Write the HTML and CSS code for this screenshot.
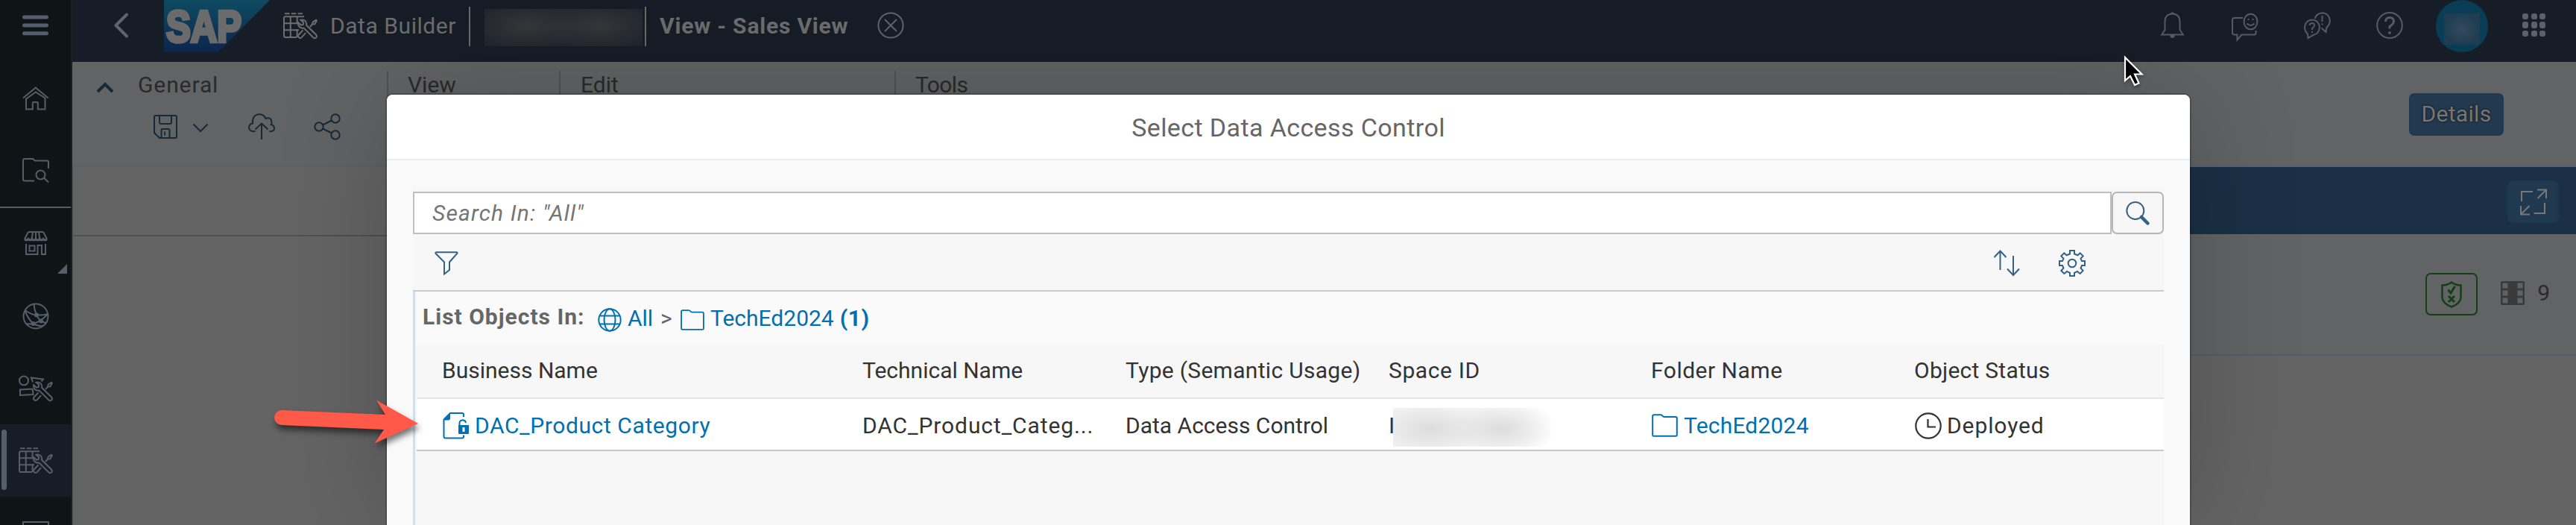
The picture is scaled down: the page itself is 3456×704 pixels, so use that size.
FILE: index.html
```
<!DOCTYPE html>
<html lang="en">
<head>
<meta charset="utf-8">
<title>Data Builder</title>
<link rel="stylesheet" href="styles.css">
</head>
<body>
<svg class="defs" width="0" height="0">
  <symbol id="tools" viewBox="0 0 46 36">
    <path d="M23.5 9.8c4.2-1.4 8.4 1.6 7.6 7L44 29.5c2.5 3-1 6.3-3.8 3.8L27.5 20.5c-4.5 1-8.5-2.5-7.3-7.3l3.6 3.4 3-.6.4-3z"/>
    <path d="M26.5 23.5l-5.8 6c-2.2 3 1.5 6 4 3.6l5.4-6M36 19l3.5-4M39 15.6l.8-3.2L44 9.8l.8 1-2.4 4.4z"/>
  </symbol>
  <symbol id="table-tools" viewBox="0 0 46 36">
    <path d="M2 1.2h6.5M10.8 1.2h6.5M19.6 1.2H26M28 5.2H3q-2 0-2 2V31q0 2 2 2h15M9.8 5v28M18.6 5v9M18.6 22v11M1 14.2h18M1 23.3h20"/>
    <use href="#tools"/>
  </symbol>
  <symbol id="folder" viewBox="0 0 35 31">
    <path d="M1.2 28.5V3q0-1.8 1.8-1.8h9q1.5 0 2.4 1.4.8 1.4 2.5 1.4H32q1.8 0 1.8 1.8v22.7q0 1.3-1.5 1.3H2.7q-1.5 0-1.5-1.3z"/>
  </symbol>
</svg>

<div class="app">
  <nav class="rail">
    <div class="rail-item menu"><svg width="36" height="28" viewBox="0 0 36 28"><path class="bars" d="M2.5 3h30M2.5 14h30M2.5 24.8h30"/></svg></div>
    <div class="rail-item"><svg width="36" height="32" viewBox="0 0 36 32"><path d="M1 15.5L17.8 1.5l16.8 14M5 15.5V30.5h8.8V22q0-1 1-1h5q1 0 1 1v8.500H30.500V15.500L17.800 7.500 5 16.800"/></svg></div>
    <div class="rail-item"><svg width="36" height="34" viewBox="0 0 36 34"><path d="M16 30.500H3q-2 0-2-2V3q0-2 2-2h11l3 2.500h16q2 0 2 2V14M29 26.500l6 6"/><circle cx="24.500" cy="22.500" r="6"/></svg></div>
    <div class="rail-item divided">
      <svg width="32" height="32" viewBox="0 0 32 32"><path d="M6 1h20M6 1L1 10.500M12 1l-1.500 10M16 1v10M20 1l1.500 10M26 1l5 9.500M3 17v14h15.500V19H24v12h5V17M7.500 19.500h7v7h-7z"/><path class="thick" d="M1 10.500q2.500 3 5 0 2.500 3 5 0 2.500 3 5 0 2.500 3 5 0 2.500 3 5 0 2.500 3 5 0"/></svg>
      <span class="corner"></span>
    </div>
    <div class="rail-item"><svg width="36" height="36" viewBox="0 0 36 36"><circle cx="18" cy="18" r="16.500"/><path d="M15.500 2q.5 8 3.500 14M3.500 10Q12 16 19 16.500 28 17 34 15M3.500 11Q8 22 14.500 28 25 33 28.500 30M14.500 28q9-2 19-12M19 16.500q2 5 6.500 8 4 2 6 3M5 28q5 1 10 0"/><g class="solid"><circle cx="19" cy="16.500" r="3"/><circle cx="25" cy="24.500" r="3"/><circle cx="14.500" cy="28" r="3"/></g></svg></div>
    <div class="rail-item"><svg width="46" height="36" viewBox="0 0 46 36"><circle cx="7" cy="7.500" r="6"/><path d="M19 9.500L17 3.500l16 2-2.500 3M19 20.500l-1-2-16 1v7.500l17.500-1z"/><use href="#tools"/></svg></div>
    <div class="rail-item selected"><span class="marker"></span><svg width="46" height="36"><use href="#table-tools"/></svg></div>
    <div class="rail-item last"><svg width="36" height="5" viewBox="0 0 36 5"><path d="M1 5V1h34v4"/></svg></div>
  </nav>

  <div class="page">
    <header class="shell">
      <svg class="back" width="20" height="34" viewBox="0 0 20 34"><path d="M17 2.500L2.500 17 17 31.500"/></svg>
      <svg class="logo" width="142" height="70" viewBox="0 0 142 70">
        <defs><linearGradient id="brand" x1="0" y1="0" x2="0" y2="1"><stop offset="0" stop-color="#0d4b61"/><stop offset="1" stop-color="#0e244c"/></linearGradient></defs>
        <path class="shape" d="M0 0h142L73 70H0z"/>
        <text x="3" y="55.500" textLength="101" lengthAdjust="spacingAndGlyphs">SAP</text>
      </svg>
      <svg class="app-icon" width="46" height="36"><use href="#table-tools"/></svg>
      <span class="app-name">Data Builder</span>
      <span class="rule"></span>
      <span class="redacted"></span>
      <span class="rule second"></span>
      <span class="object-name">View - Sales View</span>
      <svg class="close" width="36" height="36" viewBox="0 0 36 36"><circle cx="18" cy="18" r="16.600"/><path d="M10 10l16 16M26 10L10 26"/></svg>
      <div class="shell-actions">
        <svg width="31" height="36" viewBox="0 0 31 36"><path d="M1.200 30.500L5.500 24V13q0-10 10-10.500 10 .5 10 10.500v11l4.300 6.500zM13.500 2.500q2-2.500 4 0"/><path class="solid" d="M12 31h7q-.5 4-3.500 4T12 31z"/></svg>
        <svg width="36" height="36" viewBox="0 0 36 36"><path d="M15 8H4Q1 8 1 11v17q0 2.500 3 2.500h3.500v7l6-7H30q2.500 0 2.500-2.500v-3"/><ellipse cx="25.500" cy="13" rx="9" ry="10.300"/><path d="M20.500 15.500q5 5 10 0M22.500 9v2M28.500 9v2"/></svg>
        <svg width="36" height="36" viewBox="0 0 36 36"><path d="M5 29.500Q1 26 1 20.500 2 11 11 10.500q9 .5 10 10-1 9-7.500 10L5.500 35z"/><path d="M14.500 9Q17 1.500 25 1.200q9 .8 9.800 10.300 0 6-4.500 9.500L29.500 27l-6-5.500M24.500 5v8M24.500 15.500v2M7.500 18q.5-3 3.500-3 3.500.5 3 3.500-.5 2-3 3.500v2M11 26v2"/></svg>
        <svg width="36" height="36" viewBox="0 0 36 36"><ellipse cx="18" cy="18" rx="16.800" ry="17"/><path class="query" d="M12.500 13q.5-5.500 5.500-5.500t5.500 5q0 3.500-5.500 7v3"/><circle class="solid" cx="18" cy="28" r="2"/></svg>
        <span class="avatar"><span class="face"></span></span>
        <span class="dots"><i></i><i></i><i></i><i></i><i></i><i></i><i></i><i></i><i></i></span>
      </div>
    </header>

    <section class="ribbon">
      <div class="group general">
        <svg class="collapse" width="24" height="14" viewBox="0 0 24 14"><path d="M2 12L12 2l10 10"/></svg>
        <div class="group-body">
          <span class="label wide">General</span>
          <div class="commands">
            <svg width="32" height="32" viewBox="0 0 32 32"><path d="M3 1h26q2 0 2 2v26q0 2-2 2H8L1 24V3q0-2 2-2zM8 1v9q0 2 2 2h12q2 0 2-2V1M10.500 31V21q0-2 2-2h7q2 0 2 2v10M15 22.500v5"/></svg>
            <svg class="drop" width="22" height="13" viewBox="0 0 22 13"><path d="M1.500 1.500L11 11l9.500-9.500"/></svg>
            <svg class="deploy" width="36" height="36" viewBox="0 0 36 36"><path d="M9.500 24Q1.500 25 1 19q.5-5 5-5.500-1-10 6.500-12 8-1.500 11 5.500 7-3 8 5 0 2-.8 3 5 1.500 4.200 6-1.500 4-6.500 3M18 35V13.500M9.500 21.500l8.500-8 8.500 8"/></svg>
            <svg class="share" width="36" height="36" viewBox="0 0 36 36"><circle cx="7" cy="18" r="5.700"/><circle cx="29" cy="7" r="5.700"/><circle cx="29" cy="29" r="5.700"/><path d="M12 15.500L24 9.500M12 20.500l12 6"/></svg>
          </div>
        </div>
      </div>
      <div class="group view"><span class="label">View</span></div>
      <div class="group edit"><span class="label">Edit</span></div>
      <div class="group more"><span class="label tight">Tools</span></div>
      <button class="details">Details</button>
    </section>

    <main class="workspace">
      <div class="canvas"><div class="canvas-bar"></div></div>
      <aside class="properties">
        <div class="properties-head">
          <button class="expand"><svg width="36" height="36" viewBox="0 0 36 36"><path d="M2 17V4h15M23 1.500h12V13M34 2.500L23.500 13M33 19v14H18.500M1 23v11.500h12M2 33.500L12.500 23"/></svg></button>
        </div>
        <div class="properties-status">
          <span class="validation"><svg width="28" height="36" viewBox="0 0 28 36"><path d="M14 1.500q5 4 12.500 4V22q-.5 8-12.500 12.500Q2 30 1.500 22V5.500Q9 5.500 14 1.500z"/><path class="mark" d="M9.500 11.500l3.500 4.500 5.500-9M10 20l8 8M18 20l-8 8"/></svg></span>
          <svg class="film" width="32" height="32" viewBox="0 0 32 32"><rect width="32" height="32" rx="2"/><path d="M2.500 2.500h7v7h-7zM22.500 2.500h7v7h-7zM2.500 12.500h7v7h-7zM22.500 12.500h7v7h-7zM2.500 22.500h7v7h-7zM22.500 22.500h7v7h-7z"/></svg>
          <span class="count">9</span>
        </div>
      </aside>
    </main>
  </div>
</div>

<div class="dialog">
  <h1 class="dialog-title">Select Data Access Control</h1>
  <div class="panel">
    <div class="search">
      <div class="search-field">Search In: "All"</div>
      <button class="search-go"><svg width="32" height="32" viewBox="0 0 32 32"><circle cx="12.800" cy="12.500" r="11.500"/><path class="handle" d="M21 21l8.500 8.500"/></svg></button>
    </div>
    <div class="toolbar">
      <svg width="32" height="32" viewBox="0 0 32 32"><path d="M2 1.200h28q1 1 0 2L20 14.500V25l-7 5.500V14.500L1.800 3.200q-1-1 .2-2z"/></svg>
      <svg class="sort" width="36" height="36" viewBox="0 0 36 36"><path d="M9.500 27V1.500M1.500 10l8-8.500 8 8.500M27 8v26M19 25.500l8 8.500 8-8.500"/></svg>
      <svg width="36" height="36" viewBox="0 0 36 36"><circle cx="18" cy="18" r="5.300"/><path d="M15 5.500V1h6v4.500l4.500 1.800 3.200-3 4 4-3.200 3.500L31 15h4v6h-4l-1.500 3.500 3.200 3.500-4 4-3.700-3-4 1.800V35h-6v-4.200l-4-1.800-3.700 3-4-4 3.200-3.500L5 21H1v-6h4l1.500-3.200L3.300 8.300l4-4 3.200 3z"/></svg>
    </div>
    <div class="results">
      <div class="crumbs">
        <span class="crumbs-label">List Objects In:</span>
        <svg class="globe" width="32" height="32" viewBox="0 0 32 32"><circle cx="16" cy="16" r="14.700"/><ellipse cx="16" cy="16" rx="7.500" ry="14.700"/><path d="M3 10.500h26M3 21.500h26"/></svg>
        <a class="link all">All</a>
        <span class="sep">&gt;</span>
        <svg class="folder-small" width="32" height="28" viewBox="0 0 35 31" preserveAspectRatio="none"><use href="#folder"/></svg>
        <a class="link">TechEd2024</a>
        <b class="total">(1)</b>
      </div>
      <div class="row head">
        <span>Business Name</span>
        <span>Technical Name</span>
        <span class="type">Type (Semantic Usage)</span>
        <span class="space">Space ID</span>
        <span class="folder">Folder Name</span>
        <span class="status">Object Status</span>
      </div>
      <div class="row item">
        <span class="cell"><svg class="doc" width="36" height="36" viewBox="0 0 36 36"><path d="M28 6V3q0-2-2-2H10L1.500 9.500V32.500q0 2 2 2H26q2 0 2-2v-2M22.500 18v-4q.5-3.500 4.500-3.800 3.500.3 4 3.800"/><path class="fill" d="M10 1v7q0 2.500-2.500 2.500H1.500zM21 17h14v11q0 1-1 1H22q-1 0-1-1zM26.500 20v6h3v-6z"/></svg><a class="link name">DAC_Product Category</a></span>
        <span class="technical">DAC_Product_Categ...</span>
        <span>Data Access Control</span>
        <span class="cell id">I<i class="redacted-light"></i></span>
        <span class="cell"><svg class="blue" width="35" height="31"><use href="#folder"/></svg><a class="link folder-link">TechEd2024</a></span>
        <span class="cell"><svg class="clock" width="36" height="36" viewBox="0 0 36 36"><circle cx="18" cy="18" r="16.700"/><path d="M17.500 9v10.500H28"/></svg><span class="deployed">Deployed</span></span>
      </div>
    </div>
  </div>
</div>

<svg class="pointer-arrow" width="220" height="90" viewBox="360 525 220 90"><path d="M378 550L517 556 505 536.500 561 568 502.500 594.500 515 576 378 570A10 10 0 0 1 378 550z"/></svg>
<svg class="cursor" width="30" height="46" viewBox="0 0 30 46"><path d="M2 2v31l7-6 6 12 5.500-2.500L15 24.500h9.500z"/></svg>
</body>
</html>
```
FILE: styles.css
```
* { box-sizing: border-box; }

body {
  margin: 0;
  width: 3456px;
  height: 704px;
  overflow: hidden;
  position: relative;
  font: 30px/40px Roboto, "Noto Sans", sans-serif;
  color: #333;
  background: #646464;
}

svg { display: block; flex: none; fill: none; stroke: currentColor; stroke-width: 2; overflow: visible; }
.defs { position: absolute; }
button { font: inherit; padding: 0; }
.solid { fill: currentColor; stroke: none; }

.app { display: flex; height: 704px; overflow: hidden; }

/* Side rail */
.rail { width: 97px; flex: none; border-right: 2px solid #1b1f23; background: #0f1416; color: #555e6b; }
.rail-item { height: 97px; display: flex; align-items: center; justify-content: center; position: relative; padding-left: 1px; }
.rail-item.menu { height: 83px; padding-bottom: 15px; }
.bars { stroke-width: 5; stroke-linecap: round; }
.thick { stroke-width: 3; }
.rail-item.divided { height: 98px; border-top: 2px solid #5a5a5a; padding-bottom: 3px; }
.corner { position: absolute; right: 5px; bottom: 8px; border-left: 13px solid transparent; border-bottom: 13px solid #555e6b; }
.rail-item.selected { background: #161d27; }
.marker { position: absolute; left: 2px; top: 7px; width: 7px; height: 81px; border-radius: 4px; background: #555e6b; }
.rail-item.last { height: 38px; align-items: flex-end; }

/* Shell header */
.page { flex: 1; display: flex; flex-direction: column; }
.shell { height: 83px; padding-bottom: 13px; flex: none; display: flex; align-items: center; background: #171d27; color: #6d6d6d; white-space: nowrap; }
.back { margin: 0 0 2px 56px; color: #5b6472; stroke-width: 4; stroke-linecap: round; stroke-linejoin: round; }
.logo { margin-left: 47px; }
.logo .shape { fill: url(#brand); stroke: none; }
.logo text { font: bold 60px "Liberation Sans", sans-serif; fill: #6b6b6b; stroke: #6b6b6b; stroke-width: 4.500; }
.app-icon { margin-left: 18px; }
.app-name { width: 186px; margin-left: 17px; letter-spacing: .55px; }
.rule { width: 2px; height: 53px; background: #6a6a66; }
.redacted { width: 212px; height: 50px; margin: 4px 0 0 19px; background: radial-gradient(ellipse 80px 36px at 27% 46%, #35383b, transparent), radial-gradient(ellipse 80px 36px at 72% 46%, #35383b, transparent), #20252d; }
.rule.second { margin-left: 3px; }
.object-name { width: 259px; margin-left: 18px; font-weight: bold; letter-spacing: .8px; }
.close { margin: 0 0 3px 33px; color: #5b6472; }
.shell-actions { margin-left: auto; padding-right: 41px; display: flex; align-items: center; color: #555b66; }
.shell-actions svg { margin: 0 0 3px 61px; }
.shell-actions svg:first-child { margin-left: 0; margin-right: 3px; }
.query { stroke-width: 3; }
.avatar { width: 70px; height: 70px; margin-left: 44px; border-radius: 50%; background: #093c55; display: flex; align-items: center; justify-content: center; }
.face { width: 48px; height: 42px; margin-top: 8px; background: radial-gradient(ellipse closest-side, #34495d, #1e3d52); }
.dots { display: grid; grid-template-columns: repeat(3, 8px); gap: 3px 3.500px; margin: 0 0 3px 46px; }
.dots i { height: 8.500px; border-radius: 3px; background: #5b616c; }

/* Ribbon */
.ribbon { height: 141px; flex: none; display: flex; background: #626365; border-bottom: 2px solid #58626c; position: relative; }
.group { padding-top: 11px; border-left: 2px solid transparent; border-image: linear-gradient(transparent 13px, #515254 13px) 1; }
.group.general { width: 422px; border: 0; display: flex; }
.group.view { width: 231px; padding-left: 26px; }
.group.edit { width: 450px; padding-left: 27px; }
.group.more { padding-left: 26px; }
.label { display: block; color: #2a2a2a; }
.label.wide { letter-spacing: .9px; }
.label.tight { letter-spacing: -.6px; }
.collapse { margin: 17px 0 0 32px; color: #16293a; stroke-width: 4; }
.group-body { margin-left: 32px; }
.commands { display: flex; align-items: center; margin: 18px 0 0 21px; color: #16293a; }
.drop { margin: 2px 0 0 20px; }
.deploy { margin-left: 53px; }
.share { margin-left: 52px; }
.details { width: 127px; height: 57px; margin: 42px 97px 0 auto; padding-bottom: 2px; border: 2px solid #1c3a57; border-radius: 7px; background: #22394e; color: #767676; letter-spacing: .3px; text-shadow: 0 0 3px #111; }

/* Workspace behind the dialog */
.workspace { flex: 1; display: flex; }
.canvas { width: 2700px; border-left: 2px solid #5a5d60; }
.canvas-bar { height: 93px; border-bottom: 2px solid #505050; }
.properties { flex: 1; }
.properties-head { height: 90px; display: flex; align-items: center; justify-content: flex-end; padding-right: 23px; background: #1b3045; }
.expand { width: 69px; height: 57px; margin-top: 3px; border: 2px solid #1b3851; border-radius: 7px; background: #20394e; color: #777; display: flex; align-items: center; justify-content: center; }
.properties-status { height: 163px; border-bottom: 2px solid #4e5d6c; display: flex; align-items: center; justify-content: flex-end; padding: 0 35px 0 0; background: #626365; }
.validation { width: 70px; height: 57px; border: 2px solid #143f14; border-radius: 7px; color: #143f14; display: flex; align-items: center; justify-content: center; }
.validation svg { stroke-width: 2.500; }
.mark { stroke-width: 3; }
.film { margin: 0 0 3px 31px; fill: #363636; stroke: none; }
.film path { fill: #606162; }
.film rect { fill: #3a3a3a; }
.count { margin: 0 0 3px 17px; color: #2a2a2a; }

/* Dialog */
.dialog {
  position: absolute; left: 519px; top: 127px; width: 2419px; height: 577px;
  display: flex; flex-direction: column;
  border-radius: 8px 8px 0 0; background: #fafafa;
  box-shadow: 0 0 0 2px rgba(0, 0, 0, .18), 0 0 150px rgba(0, 0, 0, .2);
}
.dialog-title { height: 88px; flex: none; margin: 0; border-bottom: 2px solid #ebebeb; border-radius: 8px 8px 0 0; background: #fff; color: #666; font-size: 34px; font-weight: 400; line-height: 88px; text-align: center; letter-spacing: .4px; }
.panel { flex: 1; display: flex; flex-direction: column; margin: 35px 35px 0; padding-top: 7px; background: #f7f7f7; }
.search { height: 57px; flex: none; display: flex; }
.search-field { flex: 1; border: 2px solid #bfbfbf; background: #fff; padding-left: 24px; line-height: 53px; font-style: italic; letter-spacing: 1.150px; color: #757575; }
.search-go { width: 70px; border: 2px solid #b5b5b5; border-radius: 7px; background: #f7f7f7; color: #346187; display: flex; align-items: center; justify-content: center; }
.handle { stroke-width: 4.500; stroke-linecap: round; }
.toolbar { height: 77px; flex: none; padding: 3px 105px 0 29px; border-bottom: 2px solid #ccc; display: flex; align-items: center; color: #346187; }
.sort { margin: 0 52px 0 auto; }
.results { flex: 1; border-left: 3px solid #d1e0ee; padding-left: 2px; white-space: nowrap; }
.crumbs { height: 71px; display: flex; align-items: center; background: #fafafa; padding-left: 8px; color: #666; }
.crumbs-label { width: 217px; margin-bottom: 4px; font-weight: bold; letter-spacing: 1px; }
.globe { margin: 4px 0 0 18px; color: #0070b1; }
.link { color: #0070b1; }
.all { width: 36px; margin-left: 8px; }
.sep { width: 17px; margin-left: 8px; }
.folder-small { margin: 4px 8px 0 10px; color: #0070b1; }
.total { margin-left: 8px; color: #0070b1; letter-spacing: .5px; }

.row { display: grid; grid-template-columns: 564px 353px 353px 352px 353px 1fr; align-items: center; padding-left: 34px; }
.row.head { height: 73px; padding-bottom: 2px; border-bottom: 2px solid #e5e5e5; background: #f7f7f7; }
.row.item { height: 70px; padding-top: 3px; border-bottom: 2px solid #c8c8c8; background: #fff; }
.cell { display: flex; align-items: center; }
.type { letter-spacing: .3px; }
.space { letter-spacing: .6px; }
.folder { letter-spacing: .5px; }
.status { letter-spacing: .250px; }
.technical { letter-spacing: .9px; }
.doc { margin-left: 1px; color: #0070b1; }
.doc .fill { fill: #0070b1; stroke: none; fill-rule: evenodd; }
.name { margin-left: 7px; letter-spacing: .6px; }
.redacted-light { width: 212px; height: 52px; margin: -4px 0 -8px -2px; background: radial-gradient(ellipse 76px 38px at 24% 54%, #dcdcdc, transparent), radial-gradient(ellipse 76px 38px at 68% 54%, #dcdcdc, transparent), linear-gradient(90deg, #f3f3f3, #fafafa 80%, #fff); }
.blue { margin-left: 1px; color: #0070b1; }
.folder-link { margin-left: 8px; letter-spacing: .2px; }
.clock { margin-left: 1px; stroke-width: 2.200; }
.deployed { margin-left: 7px; letter-spacing: .9px; }

/* Annotation and mouse pointer */
.pointer-arrow { position: absolute; left: 360px; top: 525px; fill: #ff594a; stroke: none; filter: drop-shadow(2px 6px 4px rgba(0, 0, 0, .55)); }
.cursor { position: absolute; left: 2849px; top: 75px; fill: #000; stroke: #fff; stroke-width: 2.200; filter: drop-shadow(0 2px 2px rgba(0, 0, 0, .4)); }
```
